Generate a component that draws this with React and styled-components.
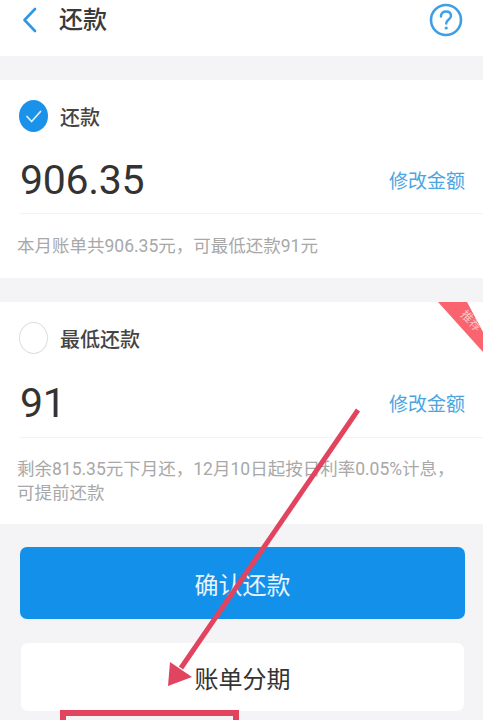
import React from 'react'
import styled, { createGlobalStyle } from 'styled-components'

const GlobalStyle = createGlobalStyle`
    html, body {
        margin: 0;
        padding: 0;
        background-color: #f4f4f7;
    }
    #root {
        height: 720px;
        overflow: hidden;
    }
`

const cjk = `Roboto, "Noto Sans CJK SC", sans-serif`

const Page = styled.div`
    position: relative;
    width: 483px;
    height: 720px;
    overflow: hidden;
    background-color: #f4f4f7;
    font-family: ${cjk};
`

const Header = styled.header`
    display: flex;
    align-items: center;
    height: 56px;
    padding: 0 20px 16px 22px;
    box-sizing: border-box;
    margin-bottom: 24px;
    background-color: #fff;
`

const HeaderTitle = styled.h1`
    margin: 0 0 0 22px;
    font-size: 24px;
    font-weight: 500;
    color: #3a3a3a;
    line-height: 40px;
`

const HelpButton = styled.div`
    margin-left: auto;
    display: flex;
`

const Card = styled.section`
    position: relative;
    background-color: #fff;
    height: ${props => props.height}px;
    margin-bottom: 24px;
    padding: 20px 0 0 20px;
    box-sizing: border-box;
    overflow: hidden;
`

const OptionRow = styled.div`
    display: flex;
    align-items: center;
    height: 32px;
    margin-left: -1px;
    gap: 12px;
`

const OptionLabel = styled.span`
    font-size: 20px;
    font-weight: 500;
    color: #444;
`

const EmptyRadio = styled.span`
    flex: none;
    width: 29px;
    height: 32px;
    box-sizing: border-box;
    border: 1.5px solid #dedde2;
    border-radius: 50%;
`

const AmountRow = styled.div`
    display: flex;
    align-items: center;
    justify-content: space-between;
    height: ${props => props.height}px;
    margin-top: 14px;
    padding-right: 18px;
    border-bottom: 1px solid #f3f3f5;
`

const Amount = styled.span`
    font-size: 41px;
    color: #333;
    letter-spacing: -0.3px;
`

const EditLink = styled.a`
    font-size: 19px;
    color: #4aa5e2;
`

const Hint = styled.p`
    margin: ${props => props.top}px 18px 0 -3px;
    font-size: 17.5px;
    line-height: 24px;
    color: #a8a8a8;
`

const Ribbon = styled.div`
    position: absolute;
    top: 0;
    right: 0;
    width: 45px;
    height: 50px;
    background-color: #f9646f;
    clip-path: polygon(0 0, 29px 0, 100% 30px, 100% 100%);
`

const RibbonText = styled.span`
    position: absolute;
    top: 12px;
    right: 0;
    font-size: 12px;
    line-height: 14px;
    color: #fbc4c8;
    transform: rotate(45deg);
`

const Footer = styled.div`
    display: flex;
    flex-direction: column;
    gap: 24px;
    padding: 0 18px 0 20px;
`

const PrimaryButton = styled.button`
    height: 72px;
    margin-top: -1px;
    border: none;
    border-radius: 7px;
    background-color: #1390ea;
    color: #e8f4fd;
    font-family: ${cjk};
    font-size: 24px;
`

const SecondaryButton = styled.button`
    height: 68px;
    margin: 0 1px;
    border: none;
    border-radius: 7px;
    background-color: #fff;
    color: #333;
    font-family: ${cjk};
    font-size: 24px;
`

const ArrowOverlay = styled.svg`
    position: absolute;
    top: 0;
    left: 0;
    pointer-events: none;
`

const Highlight = styled.div`
    position: absolute;
    left: 60px;
    top: 710px;
    width: 179px;
    height: 30px;
    box-sizing: border-box;
    border: 6px solid #e2445f;
`

const BackIcon = () => (
    <svg width="15" height="26" viewBox="0 0 15 26" fill="none">
        <path d="M13 2 L2.5 13 L13 24" stroke="#2f97e4" strokeWidth="2.6" strokeLinecap="round" strokeLinejoin="round" />
    </svg>
)

const HelpIcon = () => (
    <svg width="34" height="36" viewBox="0 0 34 36" fill="none">
        <circle cx="17" cy="18" r="15" stroke="#3f9fe4" strokeWidth="2.6" />
        <path d="M12 14.5 C12 11 14.2 9.5 17 9.5 C20 9.5 22 11.3 22 14 C22 17.4 17.2 17.6 17.2 21.5" stroke="#3f9fe4" strokeWidth="2.4" strokeLinecap="round" />
        <circle cx="17.2" cy="26" r="1.6" fill="#3f9fe4" />
    </svg>
)

const CheckedRadio = () => (
    <svg width="29" height="32" viewBox="0 0 29 32" fill="none">
        <ellipse cx="14.5" cy="16" rx="14.5" ry="16" fill="#1b92ea" />
        <path d="M8 16.5 L12.6 21.5 L21.5 11.5" stroke="#d9eefc" strokeWidth="1.8" strokeLinecap="round" strokeLinejoin="round" />
    </svg>
)

const App = () => {
    return (
        <Page>
            <GlobalStyle />
            <Header>
                <BackIcon />
                <HeaderTitle>还款</HeaderTitle>
                <HelpButton><HelpIcon /></HelpButton>
            </Header>

            <Card height={198}>
                <OptionRow>
                    <CheckedRadio />
                    <OptionLabel>还款</OptionLabel>
                </OptionRow>
                <AmountRow height={67}>
                    <Amount>906.35</Amount>
                    <EditLink>修改金额</EditLink>
                </AmountRow>
                <Hint top={20}>本月账单共906.35元，可最低还款91元</Hint>
            </Card>

            <Card height={222}>
                <Ribbon>
                    <RibbonText>推荐</RibbonText>
                </Ribbon>
                <OptionRow>
                    <EmptyRadio />
                    <OptionLabel>最低还款</OptionLabel>
                </OptionRow>
                <AmountRow height={69}>
                    <Amount>91</Amount>
                    <EditLink>修改金额</EditLink>
                </AmountRow>
                <Hint top={19}>剩余815.35元下月还，12月10日起按日利率0.05%计息，可提前还款</Hint>
            </Card>

            <Footer>
                <PrimaryButton>确认还款</PrimaryButton>
                <SecondaryButton>账单分期</SecondaryButton>
            </Footer>

            <ArrowOverlay width="483" height="720" viewBox="0 0 483 720" fill="none">
                <path d="M358 410 L181 668" stroke="#e2445f" strokeWidth="5" />
                <path d="M168 686 L170 662 L192 677 Z" fill="#e2445f" />
            </ArrowOverlay>
            <Highlight />
        </Page>
    )
}

export default App
